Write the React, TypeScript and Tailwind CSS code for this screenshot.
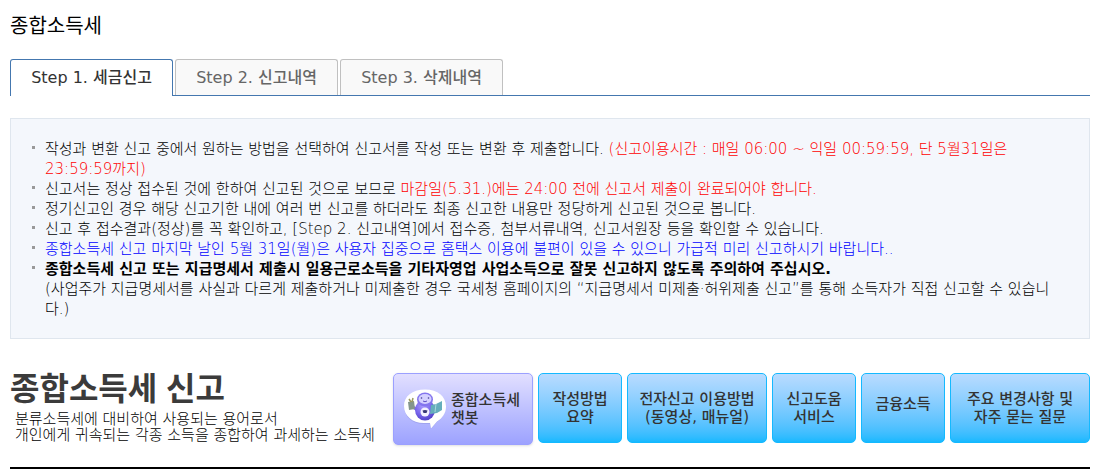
import { useState } from 'react';
import clsx from 'clsx';

const tabs = ['Step 1. 세금신고', 'Step 2. 신고내역', 'Step 3. 삭제내역'];

const guides = [
  { lines: ['작성방법', '요약'], className: 'w-[84px]' },
  { lines: ['전자신고 이용방법', '(동영상, 매뉴얼)'], className: 'w-[140px]' },
  { lines: ['신고도움', '서비스'], className: 'w-[84px]' },
  { lines: ['금융소득'], className: 'w-[84px] pb-2' },
  { lines: ['주요 변경사항 및', '자주 묻는 질문'], className: 'w-[140px]' },
];

const notices = [
  <>
    작성과 변환 신고 중에서 원하는 방법을 선택하여 신고서를 작성 또는 변환 후 제출합니다.{' '}
    <span className="text-[#ff0000]">
      (신고이용시간 : 매일 06:00 ~ 익일 00:59:59, 단 5월31일은{' '}
      <span className="whitespace-nowrap">23:59:59까지)</span>
    </span>
  </>,
  <>
    신고서는 정상 접수된 것에 한하여 신고된 것으로 보므로{' '}
    <span className="text-[#ff0000]">
      마감일(5.31.)에는 24:00 전에 신고서 제출이 완료되어야 합니다.
    </span>
  </>,
  <>정기신고인 경우 해당 신고기한 내에 여러 번 신고를 하더라도 최종 신고한 내용만 정당하게 신고된 것으로 봅니다.</>,
  <>신고 후 접수결과(정상)를 꼭 확인하고, [Step 2. 신고내역]에서 접수증, 첨부서류내역, 신고서원장 등을 확인할 수 있습니다.</>,
  <span className="text-[#0000ff]">
    종합소득세 신고 마지막 날인 5월 31일(월)은 사용자 집중으로 홈택스 이용에 불편이 있을 수 있으니 가급적 미리 신고하시기 바랍니다..
  </span>,
  <>
    <strong className="font-bold">
      종합소득세 신고 또는 지급명세서 제출시 일용근로소득을 기타자영업 사업소득으로 잘못 신고하지 않도록 주의하여 주십시오.
    </strong>
    <br />
    (사업주가 지급명세서를 사실과 다르게 제출하거나 미제출한 경우 국세청 홈페이지의 “지급명세서 미제출·허위제출 신고”를 통해 소득자가 직접 신고할 수 있습니다.)
  </>,
];

const ChatbotIcon = () => (
  <svg viewBox="0 0 44 42" className="h-[42px] w-11 shrink-0" aria-hidden="true">
    <defs>
      <radialGradient id="body" cx="0.4" cy="0.3" r="0.8">
        <stop offset="0" stopColor="#a99cff" />
        <stop offset="0.55" stopColor="#7562ea" />
        <stop offset="1" stopColor="#4638bd" />
      </radialGradient>
    </defs>
    <path
      d="M22 3C9 3 1.500 10 1.500 19.500S9 36 21 36h6l1 5 6-7c5-3 8-8 8-14.500C42 10 35 3 22 3Z"
      fill="#8d90dc"
      opacity="0.45"
    />
    <path d="M22 1.500C9 1.500 1 8.500 1 18S9 35 21 35h6l1 5.500 6-7c5-3 9-8 9-15C43 8.500 35 1.500 22 1.500Z" fill="#fff" />
    <path d="m13 21-5-3m22 2 4-1" stroke="#7864e8" strokeWidth="3" strokeLinecap="round" />
    <ellipse cx="22" cy="22" rx="10" ry="10.500" fill="url(#body)" />
    <ellipse cx="22" cy="11.500" rx="8" ry="7" fill="#8475ee" />
    <ellipse cx="22" cy="11" rx="6.500" ry="5" fill="#d4d0ff" />
    <circle cx="18.500" cy="10" r="0.800" fill="#41388f" />
    <circle cx="25.500" cy="10" r="0.800" fill="#41388f" />
    <path d="M20 13q2 1.500 4 0" fill="none" stroke="#5c4fc5" />
    <circle cx="22" cy="24" r="4.500" fill="#f3f1ff" />
    <path d="M19.500 22.500q2.500-1 5 0l-1 2.500h-3Z" fill="#383675" />
    <path d="m5 14 6-1 1 8-6 1Z" fill="#84958c" />
    <path d="m6 11 2 3m2-4-1 4" stroke="#9a995f" strokeWidth="1.500" />
    <path d="m28 17 5-1 6-3v9l-5 3-7 1Z" fill="#65aebc" />
    <path d="m33 16-1 8" stroke="#a8d9dc" />
  </svg>
);

const App = () => {
  const [activeTab, setActiveTab] = useState(0);

  return (
    <main className="bg-white px-[10px] pt-3 font-['DejaVu_Sans','Noto_Sans_CJK_KR',sans-serif] text-black">
      <div className="pr-[2px]">
        <h1 className="text-[20px] leading-7">종합소득세</h1>

        <div role="tablist" className="mt-[19px] flex gap-[2px] border-b border-[#4477af]">
          {tabs.map((tab, index) => (
            <button
              key={tab}
              type="button"
              role="tab"
              aria-selected={activeTab === index}
              onClick={() => setActiveTab(index)}
              className={clsx(
                'w-[163px] rounded-t-[3px] border border-b-0 text-[16px] font-medium',
                activeTab === index
                  ? '-mb-px h-[37px] border-[#4477af] bg-white text-[#333]'
                  : 'h-9 border-[#c0c0c0] bg-[#f9f9f9] text-[#666]',
              )}
            >
              {tab}
            </button>
          ))}
        </div>

        <section className="mt-[22px] border border-[#dfe6ee] bg-[#f4f7fc] pt-5 pr-7 pb-[19px] pl-[21px]">
          <ul className="text-[15px] leading-5 font-light">
            {notices.map((notice, index) => (
              <li key={index} className="flex gap-[10px]">
                <span className="mt-[7px] size-[3px] shrink-0 bg-[#999]" />
                <p>{notice}</p>
              </li>
            ))}
          </ul>
        </section>

        <section className="mt-[34px] flex items-start justify-between border-b-2 border-black pb-[22px]">
          <div>
            <h2 className="font-['Liberation_Sans','Noto_Sans_CJK_KR',sans-serif] text-[32px] leading-8 font-bold text-[#3b3b3b]">
              종합소득세 신고
            </h2>
            <p className="mt-[6px] pl-[5px] text-[15px] leading-4 font-light">
              분류소득세에 대비하여 사용되는 용어로서
              <br />
              개인에게 귀속되는 각종 소득을 종합하여 과세하는 소득세
            </p>
          </div>

          <div className="flex shrink-0 items-start gap-[5px] text-[15px] leading-[18px] font-medium text-[#333]">
            <button
              type="button"
              className="flex h-[72px] w-[140px] items-center gap-1 rounded-[5px] border border-[#9ba0ff] bg-linear-to-b from-[#e2dfff] to-[#9da2ff] pl-[9px] text-left shadow-sm"
            >
              <ChatbotIcon />
              <span>
                종합소득세
                <br />
                챗봇
              </span>
            </button>
            {guides.map((guide) => (
              <button
                key={guide.lines[0]}
                type="button"
                className={clsx(
                  'h-[70px] rounded-[5px] border border-[#14b9ff] bg-linear-to-b from-[#b9dbff] to-[#14b9ff]',
                  guide.className,
                )}
              >
                {guide.lines.map((line) => (
                  <span key={line} className="block whitespace-nowrap">
                    {line}
                  </span>
                ))}
              </button>
            ))}
          </div>
        </section>
      </div>
    </main>
  );
};

export default App;
